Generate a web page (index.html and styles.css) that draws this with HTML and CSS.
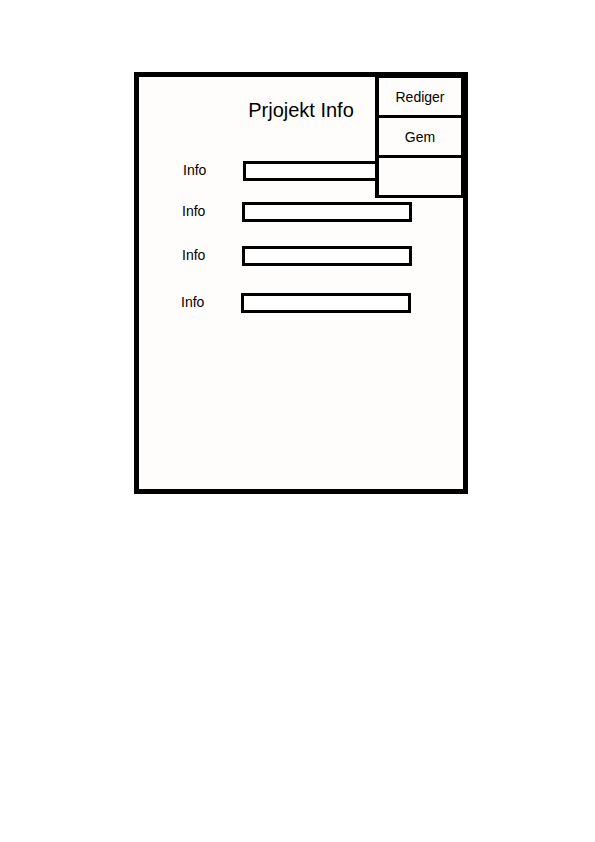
FILE: index.html
```html
<!DOCTYPE html>
<html lang="da">
<head>
    <meta charset="UTF-8">
    <meta name="viewport" content="width=device-width, initial-scale=1.0">
    <title>Prjojekt Info</title>
    <link rel="stylesheet" href="styles.css">
</head>
<body>
    <div class="frame">
        <h1 class="title">Prjojekt Info</h1>

        <div class="fields">
            <div class="row">
                <label class="label">Info</label>
                <input class="field" type="text">
            </div>
            <div class="row">
                <label class="label">Info</label>
                <input class="field" type="text">
            </div>
            <div class="row">
                <label class="label">Info</label>
                <input class="field" type="text">
            </div>
            <div class="row">
                <label class="label">Info</label>
                <input class="field" type="text">
            </div>
        </div>

        <div class="menu">
            <button class="menu-item">Rediger</button>
            <button class="menu-item">Gem</button>
            <div class="menu-item"></div>
        </div>
    </div>
</body>
</html>
```

FILE: styles.css
```css
body {
    margin: 0;
    background-color: #ffffff;
    color: #000000;
    font-family: "Liberation Sans", Arial, sans-serif;
}
.frame {
    position: relative;
    box-sizing: border-box;
    width: 334px;
    height: 422px;
    margin: 72px 0 0 134px;
    border: 5px solid #000000;
    background-color: #fffdfb;
}
.title {
    margin: 22px 0 0 0;
    font-size: 20px;
    font-weight: normal;
    line-height: 23px;
    text-align: center;
}
.fields {
    display: flex;
    flex-direction: column;
    padding-left: 43px;
}
.row {
    display: flex;
    align-items: center;
    height: 20px;
}
.row:nth-child(1) {
    margin-top: 39px;
    margin-left: 1px;
}
.row:nth-child(2) {
    margin-top: 21px;
}
.row:nth-child(3) {
    margin-top: 24px;
}
.row:nth-child(4) {
    margin-top: 27px;
    margin-left: -1px;
}
.label {
    width: 60px;
    font-size: 14px;
    line-height: 16px;
    margin-top: -2px;
}
.field {
    box-sizing: border-box;
    width: 170px;
    height: 20px;
    margin: 0;
    padding: 0;
    border: 3px solid #000000;
    border-radius: 0;
    background-color: #ffffff;
}
/* menu sits over the top right corner of the frame */
.menu {
    position: absolute;
    top: -5px;
    left: 236px;
    box-sizing: border-box;
    width: 89px;
    display: flex;
    flex-direction: column;
    border-top: 6px solid #000000;
    border-left: 4px solid #000000;
    border-right: 3px solid #000000;
    background-color: #fffdfb;
}
.menu-item {
    display: block;
    box-sizing: content-box;
    height: 37px;
    margin: 0;
    padding: 0;
    border: none;
    border-bottom: 3px solid #000000;
    background-color: #fffdfb;
    color: #000000;
    font-family: "Liberation Sans", Arial, sans-serif;
    font-size: 14px;
    text-align: center;
}
```
